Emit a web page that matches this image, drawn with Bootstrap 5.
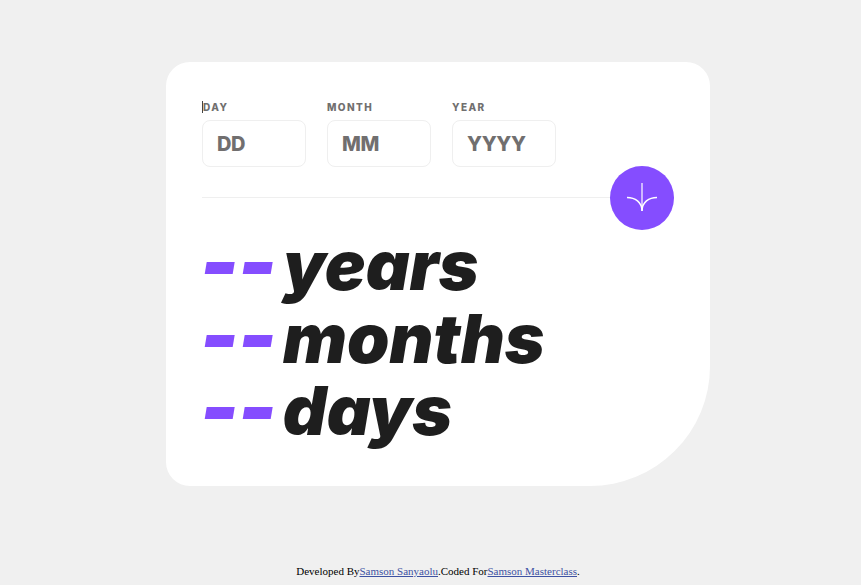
<!DOCTYPE html>
<html lang="en">
<head>
<meta charset="utf-8">
<title>Age calculator</title>
<link href="https://cdn.jsdelivr.net/npm/bootstrap@5.3.0/dist/css/bootstrap.min.css" rel="stylesheet">
<style>
html, body { height: 100%; }
body { background: #f0f0f0; font-family: "Inter", "Noto Sans", sans-serif; overflow: hidden; }
.page-wrap { height: 585px; padding: 62px 0 0 15px; }
.age-card { width: 544px; height: 424px; background: #fff; border-radius: 24px 24px 120px 24px; padding: 36px 36px 0; }
.field-row { gap: 21px; }
.field-box { width: 104px; }
.field-label { font-size: 10px; line-height: 15px; font-weight: 800; letter-spacing: 1.4px; color: #716f6f; margin: 0 0 5px; display: block; height: 17px; padding: 2px 0 0 0; }
.first-label { position: relative; padding-left: 1px; }
.first-label::before { content: ""; position: absolute; left: 0; top: 3px; width: 1px; height: 12px; background: #444; }
.age-input.form-control { height: 47px; width: 104px; border: 1px solid #efefef; border-radius: 8px; padding: 0 14px; font-size: 20px; font-weight: 800; letter-spacing: -.4px; color: #1e1e1e; background: #fff; }
.age-input.form-control::placeholder { color: #716f6f; opacity: 1; }
.divider-row { height: 64px; margin-top: -1px; }
.divider-line { flex: 1; height: 1px; background: #efefef; margin-bottom: 2px; }
.go-btn { width: 64px; height: 64px; background: #854dff; border: 0; padding: 0; border-radius: 50%; flex: none; }
.result-stack { margin-top: -1px; }
.result-line { font-size: 68px; line-height: 72.6px; font-weight: 900; font-style: italic; color: #1e1e1e; letter-spacing: -.1px; white-space: nowrap; }
.dash-pair { line-height: 0; color: #854dff; font-size: 82px; letter-spacing: -1px; vertical-align: -2px; margin-left: -2px; margin-right: 7px; }
.foot-note { position: absolute; left: 15px; right: 0; top: 564px; font-family: "Liberation Serif", serif; font-size: 11px; line-height: 14px; color: #000; text-align: center; }
.foot-note a { color: #3e52a3; }
</style>
</head>
<body>
<div class="page-wrap d-flex justify-content-center align-items-start">
  <main class="age-card">
    <form class="d-flex field-row">
      <div class="field-box">
        <label class="field-label first-label" for="d">DAY</label>
        <input id="d" class="form-control age-input" placeholder="DD">
      </div>
      <div class="field-box">
        <label class="field-label" for="m">MONTH</label>
        <input id="m" class="form-control age-input" placeholder="MM">
      </div>
      <div class="field-box">
        <label class="field-label" for="y">YEAR</label>
        <input id="y" class="form-control age-input" placeholder="YYYY">
      </div>
    </form>
    <div class="divider-row d-flex align-items-center">
      <div class="divider-line"></div>
      <button class="go-btn d-flex align-items-center justify-content-center" type="button" aria-label="Calculate">
        <svg width="32" height="32" viewBox="0 0 32 32" fill="none" stroke="#fff" stroke-width="1.5">
          <path d="M16 1V29" stroke-opacity=".8"/>
          <path d="M1 15.5C9 15.5 16 20 16 29C16 20 23 15.5 31 15.5"/>
        </svg>
      </button>
    </div>
    <section class="result-stack">
      <div class="result-line"><span class="dash-pair">--</span>years</div>
      <div class="result-line"><span class="dash-pair">--</span>months</div>
      <div class="result-line"><span class="dash-pair">--</span>days</div>
    </section>
  </main>
</div>
<footer class="foot-note">Developed By<a href="#">Samson Sanyaolu</a>.Coded For<a href="#">Samson Masterclass</a>.</footer>
</body>
</html>
